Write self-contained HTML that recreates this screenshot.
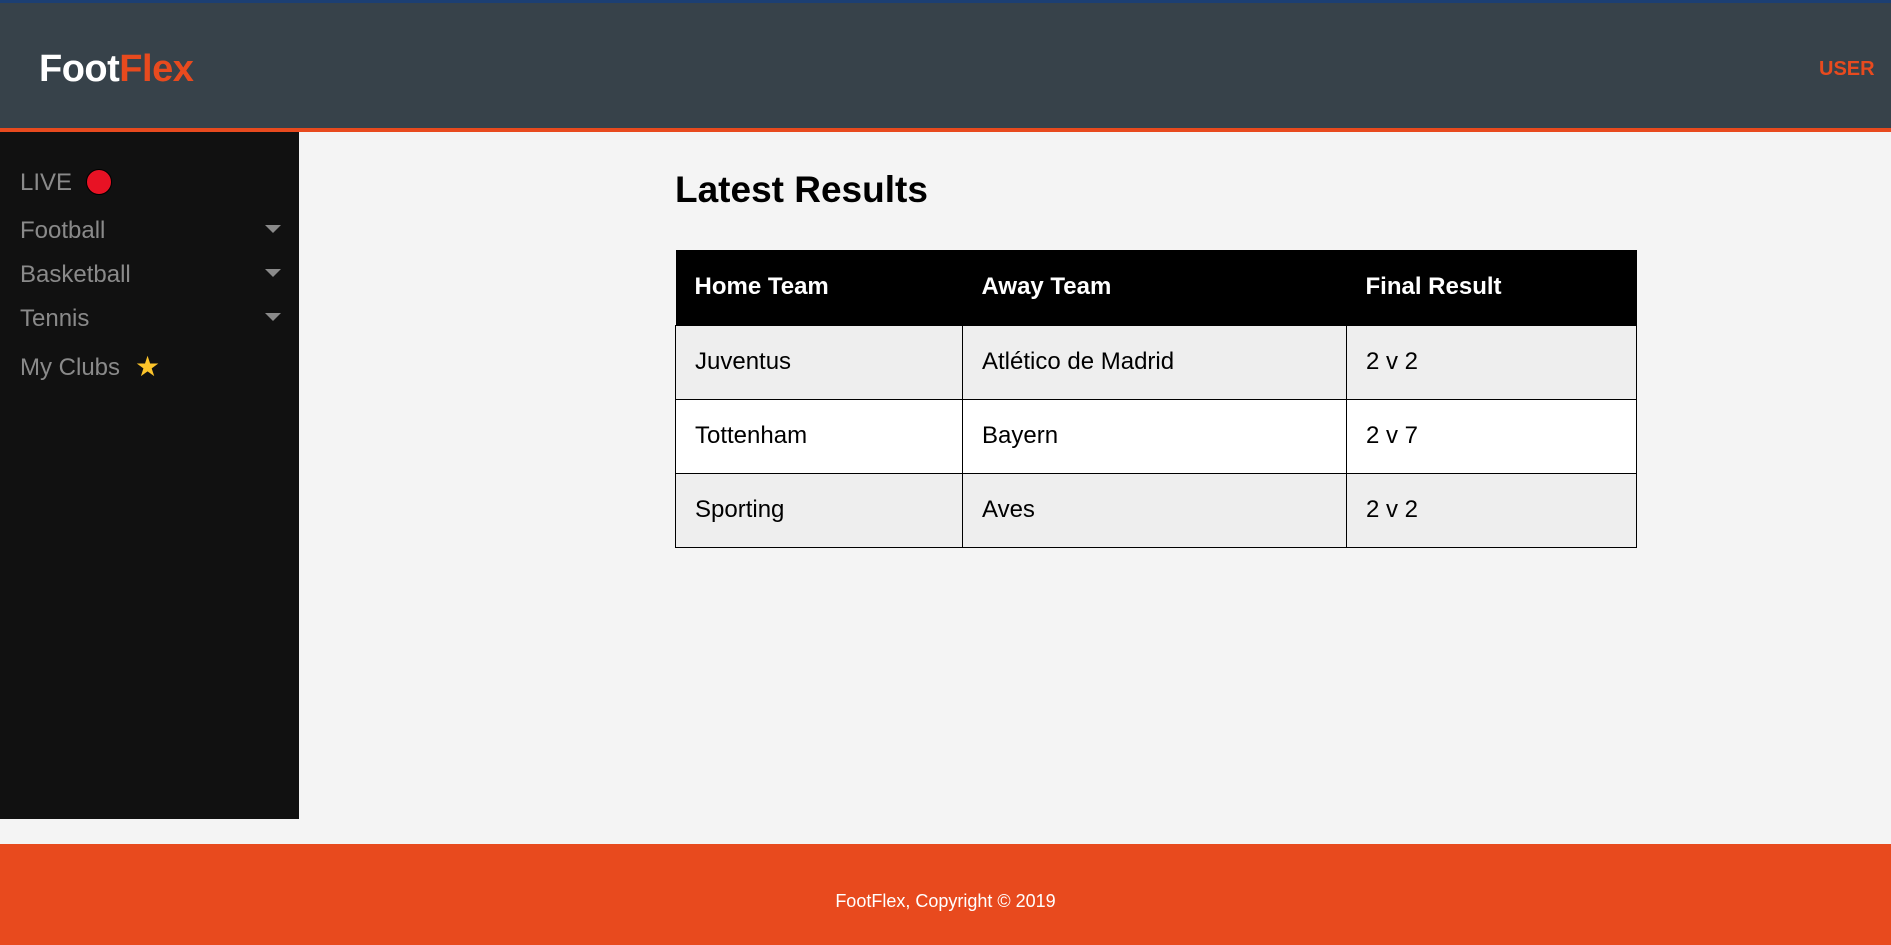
<!DOCTYPE html>
<html><head><meta charset="utf-8"><style>
*{margin:0;padding:0;box-sizing:border-box}
body{width:1891px;height:945px;background:#f4f4f4;font-family:"Liberation Sans",Arial,sans-serif;position:relative;overflow:hidden}
.hdr{position:absolute;left:0;top:0;width:1891px;height:132px;background:#37424a;border-top:3px solid #1c3f73;border-bottom:4px solid #e84a1e}
.logo{position:absolute;left:39px;top:45px;font-size:38px;font-weight:bold;color:#fff;letter-spacing:-0.5px}
.logo span{color:#e84a1e}
.user{position:absolute;left:1819px;top:55px;font-size:20px;font-weight:bold;color:#e84a1e}
.side{position:absolute;left:0;top:132px;width:299px;height:687px;background:#111}
.it{position:absolute;left:20px;font-size:24px;color:#8a8a8a}
.arr{position:absolute;left:265px;width:0;height:0;border-left:8px solid transparent;border-right:8px solid transparent;border-top:8px solid #8a8a8a}
.dot{position:absolute;left:86px;top:169px;width:26px;height:26px;border-radius:50%;background:#e81224;border:1px solid #000}
.star{position:absolute;left:135px;top:350px;font-size:28px;color:#fcc42a}
h1{position:absolute;left:675px;top:169px;font-size:37px;font-weight:bold;color:#000}
table{position:absolute;left:675px;top:250px;width:962px;border-collapse:collapse;font-size:24px}
th{background:#000;color:#fff;text-align:left;height:75px;padding-left:19px;font-weight:bold}
td{height:74px;padding-left:19px;border:1px solid #000;color:#000}
tr.g td{background:#eeeeee}
tr.w td{background:#fff}
.foot{position:absolute;left:0;top:844px;width:1891px;height:101px;background:#e84a1e;color:#fff;font-size:18px;text-align:center;padding-top:47px}
</style></head><body>
<div class="hdr"><div class="logo">Foot<span>Flex</span></div><div class="user">USER</div></div>
<div class="side"></div>
<div class="it" style="top:169px">LIVE</div><div class="dot"></div>
<div class="it" style="top:217px">Football</div><div class="arr" style="top:225px"></div>
<div class="it" style="top:261px">Basketball</div><div class="arr" style="top:269px"></div>
<div class="it" style="top:305px">Tennis</div><div class="arr" style="top:313px"></div>
<div class="it" style="top:354px">My Clubs</div><div class="star">★</div>
<h1>Latest Results</h1>
<table>
<tr><th style="width:287px">Home Team</th><th style="width:384px">Away Team</th><th>Final Result</th></tr>
<tr class="g"><td>Juventus</td><td>Atlético de Madrid</td><td>2 v 2</td></tr>
<tr class="w"><td>Tottenham</td><td>Bayern</td><td>2 v 7</td></tr>
<tr class="g"><td>Sporting</td><td>Aves</td><td>2 v 2</td></tr>
</table>
<div class="foot">FootFlex, Copyright © 2019</div>
</body></html>
